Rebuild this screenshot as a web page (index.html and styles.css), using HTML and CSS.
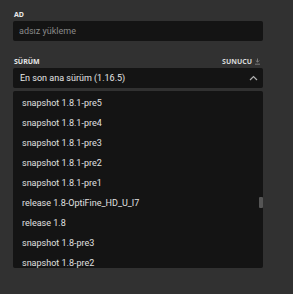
FILE: index.html
```html
<!DOCTYPE html>
<html lang="tr">
<head>
    <meta charset="UTF-8">
    <meta name="viewport" content="width=device-width, initial-scale=1.0">
    <title>Yükleme</title>
    <link rel="stylesheet" href="styles.css">
</head>
<body>
    <div class="form">
        <div class="field">
            <label class="field-label" for="name">AD</label>
            <input id="name" class="text-input" type="text" placeholder="adsız yükleme">
        </div>
        <div class="field version">
            <div class="label-row">
                <span class="field-label">SÜRÜM</span>
                <span class="server-link">SUNUCU
                    <svg width="7" height="7" viewBox="0 0 7 7"><path d="M3.5 0.5v3.5M1.8 2.5l1.7 1.7 1.7-1.7M1 6.2h5" fill="none" stroke="#7a7a7a" stroke-width="1"/></svg>
                </span>
            </div>
            <button type="button" class="select">
                <span>En son ana sürüm (1.16.5)</span>
                <svg width="9" height="6" viewBox="0 0 9 6"><path d="M1 5l3.5-3.5L8 5" fill="none" stroke="#b0b0b0" stroke-width="1.2"/></svg>
            </button>
            <div class="options">
                <ul>
                    <li>snapshot 1.8.1-pre5</li>
                    <li>snapshot 1.8.1-pre4</li>
                    <li>snapshot 1.8.1-pre3</li>
                    <li>snapshot 1.8.1-pre2</li>
                    <li>snapshot 1.8.1-pre1</li>
                    <li>release 1.8-OptiFine_HD_U_I7</li>
                    <li>release 1.8</li>
                    <li>snapshot 1.8-pre3</li>
                    <li>snapshot 1.8-pre2</li>
                </ul>
                <div class="scroll-thumb"></div>
            </div>
        </div>
    </div>
</body>
</html>
```

FILE: styles.css
```css
body {
    margin: 0;
    padding: 10px 30px 0 13px;
    background-color: #313131;
    font-family: Roboto, "Noto Sans", sans-serif;
    color: #e2e2e2;
}
.form {
    width: 250px;
}
.field-label {
    display: block;
    font-family: "Noto Sans", sans-serif;
    font-size: 7px;
    font-weight: bold;
    line-height: 9px;
    color: #e8e8e8;
    padding-left: 1px;
}
.text-input {
    display: block;
    box-sizing: border-box;
    width: 100%;
    height: 20px;
    margin-top: 2px;
    padding: 0 6px;
    border: none;
    border-radius: 2px;
    background-color: #141414;
    color: #e2e2e2;
    font-family: inherit;
    font-size: 9px;
    outline: none;
}
.text-input::placeholder {
    color: #8a8a8a;
}
.version {
    margin-top: 16px;
}
.label-row {
    display: flex;
    justify-content: space-between;
    align-items: center;
}
.server-link {
    display: flex;
    align-items: center;
    gap: 2px;
    font-family: "Noto Sans", sans-serif;
    font-size: 7px;
    font-weight: bold;
    line-height: 9px;
    color: #d8d8d8;
    padding-right: 2px;
}
.select {
    display: flex;
    justify-content: space-between;
    align-items: center;
    box-sizing: border-box;
    width: 100%;
    height: 20px;
    margin-top: 2px;
    padding: 0 5px 0 7px;
    border: none;
    border-radius: 2px;
    background-color: #141414;
    color: #e6e6e6;
    font-family: inherit;
    font-size: 9px;
}
.options {
    position: relative;
    height: 177px;
    margin-top: 3px;
    overflow: hidden;
    border-radius: 2px;
    background-color: #141414;
}
.options ul {
    list-style: none;
    margin: 0;
    padding: 2px 0 0;
}
.options li {
    height: 20px;
    line-height: 20px;
    padding-left: 9px;
    font-size: 9px;
    color: #e0e0e0;
}
.scroll-thumb {
    position: absolute;
    right: 0;
    top: 106px;
    width: 4px;
    height: 11px;
    border-radius: 1px;
    background-color: #555;
}
```
